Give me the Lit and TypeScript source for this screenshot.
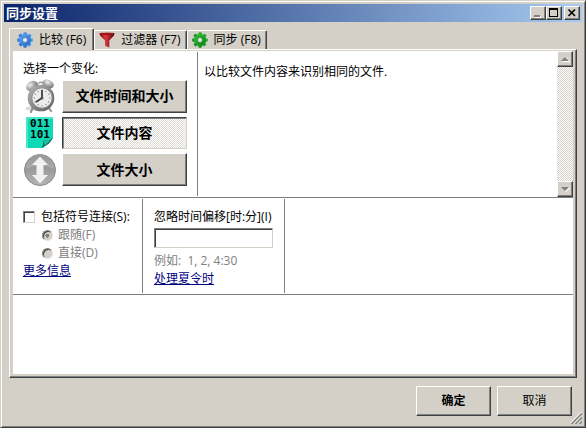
import { LitElement, html, css, svg } from "lit";
import { customElement, state } from "lit/decorators.js";
import { classMap } from "lit/directives/class-map.js";

const gear = (id: string, light: string, dark: string, hole: string) => html`
  <svg width="16" height="16" viewBox="0 0 16 16" aria-hidden="true">
    <defs>
      <linearGradient id=${id} x1="0" y1="0" x2="1" y2="1">
        <stop offset="0" stop-color=${light} />
        <stop offset="1" stop-color=${dark} />
      </linearGradient>
    </defs>
    ${[0, 45, 90, 135].map(
      (a) => svg`<rect x="6.2" y="0.2" width="3.6" height="15.6" rx="1" fill="url(#${id})" transform="rotate(${a} 8 8)" />`
    )}
    <circle cx="8" cy="8" r="6" fill="url(#${id})" />
    <circle cx="8" cy="8" r="2.5" fill=${hole} stroke=${dark} stroke-width="0.6" />
  </svg>
`;

const funnel = html`
  <svg width="16" height="16" viewBox="0 0 16 16" aria-hidden="true">
    <defs>
      <linearGradient id="funnel">
        <stop offset="0" stop-color="#7a0a0d" />
        <stop offset="0.4" stop-color="#d8383d" />
        <stop offset="1" stop-color="#5c0305" />
      </linearGradient>
    </defs>
    <path d="M0.5 1Q8 0 15.5 1L15 3.5L10.3 8.5V15.5L6 13.8V8.5L1 3.5Z" fill="url(#funnel)" />
    <ellipse cx="8" cy="2" rx="6.6" ry="1" fill="#9c1418" />
  </svg>
`;

const clock = html`
  <svg width="34" height="34" viewBox="0 0 34 34" aria-hidden="true">
    <defs>
      <radialGradient id="bell" cx="0.4" cy="0.3" r="0.7">
        <stop offset="0" stop-color="#f0f0f0" />
        <stop offset="1" stop-color="#6e6e6e" />
      </radialGradient>
      <linearGradient id="rim" x1="0" y1="0" x2="1" y2="1">
        <stop offset="0" stop-color="#b8b8b8" />
        <stop offset="1" stop-color="#585858" />
      </linearGradient>
    </defs>
    <ellipse cx="13" cy="29.5" rx="11" ry="2.5" fill="#dcdcdc" />
    <path d="M10 28L8 33M25 28L28 32" stroke="#8a8a8a" stroke-width="2" stroke-linecap="round" />
    <path d="M10 9L14 13M25 7L22 12" stroke="#777" stroke-width="2" />
    <ellipse cx="9" cy="7" rx="6.3" ry="4.6" transform="rotate(-32 9 7)" fill="url(#bell)" />
    <ellipse cx="25" cy="5" rx="6" ry="4.2" transform="rotate(25 25 5)" fill="url(#bell)" />
    <path d="M15 5Q17 2 20 4" fill="none" stroke="#999" stroke-width="1.3" />
    <circle cx="18" cy="19" r="13.3" fill="url(#rim)" />
    <circle cx="19" cy="19" r="10.2" fill="#ececec" stroke="#8d8d8d" />
    ${[0, 30, 60, 90, 120, 150, 180, 210, 240, 270, 300, 330].map(
      (a) => svg`<path d="M19 10.5V12" stroke="#888" transform="rotate(${a} 19 19)" />`
    )}
    <path d="M19 11V19L13 23" fill="none" stroke="#3c3c3c" stroke-width="1.8" stroke-linejoin="round" />
    <circle cx="19" cy="19" r="1.5" fill="#555" />
  </svg>
`;

const binaryPage = html`
  <svg width="34" height="32" viewBox="0 0 34 32" aria-hidden="true">
    <path d="M3 0H30V21L20 31H3Z" fill="#10d9b6" />
    <path d="M3 0H30V2H5V31H3Z" fill="#45e8cc" />
    <path d="M18 31Q21 28 20 23Q25 25 30 20.5Q27 28 18 31Z" fill="#076f5e" />
    <path d="M20 23Q25 25 30 20.5L22 28.5Q21 26 20 23Z" fill="#27bca2" />
    <text y="10" text-anchor="middle" font-family="DejaVu Sans Mono, monospace" font-weight="bold" font-size="11"><tspan x="17">011</tspan><tspan x="17" dy="11">101</tspan></text>
  </svg>
`;

const sizeArrow = html`
  <svg width="34" height="32" viewBox="0 0 34 32" aria-hidden="true">
    <defs>
      <linearGradient id="disc" x1="0" y1="0" x2="0" y2="1">
        <stop offset="0" stop-color="#7f7f7f" />
        <stop offset="0.5" stop-color="#9c9c9c" />
        <stop offset="1" stop-color="#b5b5b5" />
      </linearGradient>
    </defs>
    <circle cx="17" cy="16" r="15.5" fill="url(#disc)" stroke="#8a8a8a" />
    <path d="M2.500 15A14.500 14.500 0 0 1 31.500 15Q17 8 2.500 15Z" fill="#fff" opacity="0.18" />
    <path d="M17 2.500L25 11H20.500V21H25L17 29.500L9 21H13.500V11H9Z" fill="#f1f1f1" />
  </svg>
`;

@customElement("app-root")
export class AppRoot extends LitElement {
  @state() private tab = 0;
  @state() private variant = 1;

  static styles = css`
    :host {
      display: block;
      font: 12px/18px "Open Sans", "Noto Sans CJK SC", sans-serif;
      color: #000;
      cursor: default;
    }
    * {
      box-sizing: border-box;
    }
    button,
    input,
    textarea {
      font: inherit;
      color: inherit;
      margin: 0;
    }
    svg {
      display: block;
      flex: none;
    }
    .window {
      position: relative;
      min-height: 100vh;
      display: flex;
      flex-direction: column;
      padding: 3px;
      background: #d4d0c8;
      border: 1px solid;
      border-color: #d4d0c8 #404040 #404040 #d4d0c8;
      box-shadow: inset 1px 1px #fff, inset -1px -1px #808080;
    }
    .titlebar {
      display: flex;
      align-items: center;
      height: 18px;
      padding: 0 2px;
      background: linear-gradient(to right, #0a246a, #a6caf0);
    }
    .title {
      flex: 1;
      margin: 0;
      font-size: 13px;
      line-height: 18px;
      font-weight: 700;
      color: #fff;
    }
    .raised {
      padding: 0;
      background: #d4d0c8;
      border: 1px solid;
      border-color: #fff #404040 #404040 #fff;
      border-radius: 0;
      box-shadow: inset -1px -1px #808080;
    }
    .caption {
      width: 16px;
      height: 14px;
    }
    .close {
      margin-left: 2px;
    }
    .body {
      flex: 1;
      display: flex;
      flex-direction: column;
      padding: 6px 5px 0;
    }
    .tabs {
      display: flex;
      align-items: flex-end;
      height: 21px;
    }
    .tab {
      display: flex;
      align-items: center;
      gap: 6px;
      height: 19px;
      padding: 0 5px 0 4px;
      background: #d4d0c8;
      border: 1px solid;
      border-color: #fff #404040 transparent #fff;
      border-bottom: 0;
      border-radius: 2px 2px 0 0;
      box-shadow: inset -1px 0 #808080;
      white-space: nowrap;
    }
    .tab.selected {
      position: relative;
      height: 22px;
      margin-bottom: -1px;
      padding: 0 7px;
    }
    .pane {
      flex: 1;
      display: flex;
      padding: 1px 2px 2px 3px;
      border: 1px solid;
      border-color: #fff #404040 #404040 #fff;
      box-shadow: inset -1px -1px #808080;
    }
    .page {
      flex: 1;
      background: #fff;
      margin: 0 1px 1px 0;
    }
    .row {
      display: flex;
      border-bottom: 1px solid #808080;
    }
    .cell {
      margin: 1px 0;
      border-right: 1px solid #808080;
    }
    .variants {
      width: 185px;
      padding: 8px 10px 10px;
    }
    .choices {
      display: grid;
      gap: 4px;
      margin-top: 1px;
    }
    .choice {
      display: grid;
      grid-template-columns: 34px 1fr;
      align-items: center;
      column-gap: 5px;
      height: 33px;
    }
    .toggle {
      height: 33px;
      font-size: 14px;
      font-weight: 700;
    }
    .toggle.pressed {
      height: 32px;
      background: repeating-conic-gradient(#fff 0 25%, #dedbd5 0 50%) 0 0 / 2px 2px;
      border-color: #404040 #d4d0c8 #d4d0c8 #404040;
      box-shadow: inset 1px 1px #808080;
    }
    .description {
      flex: 1;
      min-width: 0;
      display: flex;
    }
    .note {
      flex: 1;
      min-width: 0;
      resize: none;
      border: 0;
      outline: 0;
      padding: 12px 6px;
      background: #fff;
      overflow: hidden;
    }
    .scrollbar {
      display: flex;
      flex-direction: column;
      justify-content: space-between;
      width: 16px;
      background: repeating-conic-gradient(#fff 0 25%, #d4d0c8 0 50%) 0 0 / 2px 2px;
    }
    .scroll {
      width: 16px;
      height: 16px;
    }
    .links {
      width: 130px;
      padding: 9px 0 5px 10px;
    }
    .shift {
      width: 142px;
      padding: 9px 11px 5px;
    }
    .line {
      display: flex;
      align-items: center;
      height: 18px;
      white-space: nowrap;
    }
    .group {
      margin: 0;
      padding: 0 0 0 19px;
      border: 0;
      color: #808080;
    }
    .check {
      appearance: none;
      width: 12px;
      height: 12px;
      margin-right: 6px;
      background: #fff;
      border: 1px solid;
      border-color: #808080 #d4d0c8 #d4d0c8 #808080;
      box-shadow: inset 1px 1px #404040;
    }
    .radio {
      appearance: none;
      width: 11px;
      height: 11px;
      margin-right: 5px;
      border-radius: 50%;
      border: 1px solid;
      border-color: #808080 #e8e5df #e8e5df #808080;
      background: #d4d0c8;
      box-shadow: inset 1px 1px #404040;
    }
    .radio:checked {
      background: radial-gradient(circle, #808080 2px, #d4d0c8 2px);
    }
    .offset {
      display: block;
      width: 100%;
      height: 20px;
      margin: 2px 0 4px;
      padding: 0 3px;
      background: #fff;
      border: 1px solid;
      border-color: #808080 #d4d0c8 #d4d0c8 #808080;
      border-radius: 0;
      box-shadow: inset 1px 1px #404040;
    }
    .hint {
      color: #808080;
      white-space: pre;
    }
    a {
      color: #000080;
      text-decoration: underline;
    }
    .footer {
      display: flex;
      justify-content: flex-end;
      gap: 6px;
      padding: 8px 10px;
    }
    .action {
      width: 75px;
      height: 30px;
    }
    .default {
      font-weight: 700;
    }
    .grip {
      position: absolute;
      right: 3px;
      bottom: 3px;
    }
  `;

  private tabs = [
    { label: "比较 (F6)", icon: gear("blue", "#5aa7f5", "#2468c0", "#e4e6ea") },
    { label: "过滤器 (F7)", icon: funnel },
    { label: "同步 (F8)", icon: gear("green", "#35c435", "#0a7a1c", "#e2e6de") },
  ];

  private variants = [
    { label: "文件时间和大小", icon: clock },
    { label: "文件内容", icon: binaryPage },
    { label: "文件大小", icon: sizeArrow },
  ];

  render() {
    return html`
      <main class="window">
        <header class="titlebar">
          <h1 class="title">同步设置</h1>
          <button class="raised caption" aria-label="最小化">
            <svg width="14" height="12" viewBox="0 0 14 12"><path d="M4 9H10V11H4Z" fill="#fff" /><path d="M3 8H9V10H3Z" fill="#808080" /></svg>
          </button>
          <button class="raised caption" aria-label="最大化">
            <svg width="14" height="12" viewBox="0 0 14 12"><path d="M2 1H11V10H2ZM3 3V9H10V3Z" fill-rule="evenodd" /></svg>
          </button>
          <button class="raised caption close" aria-label="关闭">
            <svg width="14" height="12" viewBox="0 0 14 12"><path d="M3.500 2.500L10 9M10 2.500L3.500 9" stroke="#000" stroke-width="1.700" /></svg>
          </button>
        </header>
        <div class="body">
          <div class="tabs" role="tablist">
            ${this.tabs.map(
              (t, i) => html`<button
                role="tab"
                aria-selected=${i === this.tab}
                class=${classMap({ tab: true, selected: i === this.tab })}
                @click=${() => (this.tab = i)}
              >${t.icon}<span>${t.label}</span></button>`
            )}
          </div>
          <div class="pane" role="tabpanel">
            <div class="page">
              <section class="row">
                <div class="cell variants">
                  <div class="line">选择一个变化:</div>
                  <div class="choices">
                    ${this.variants.map(
                      (v, i) => html`<div class="choice">
                        ${v.icon}
                        <button
                          class=${classMap({ raised: true, toggle: true, pressed: i === this.variant })}
                          aria-pressed=${i === this.variant}
                          @click=${() => (this.variant = i)}
                        >${v.label}</button>
                      </div>`
                    )}
                  </div>
                </div>
                <div class="description">
                  <textarea class="note" readonly aria-label="说明">以比较文件内容来识别相同的文件.</textarea>
                  <div class="scrollbar">
                    <button class="raised scroll" aria-label="向上">
                      <svg width="14" height="14" viewBox="0 0 14 14"><path d="M4 10H12V9L8 5Z" fill="#fff" /><path d="M3 9H11L7 5Z" fill="#808080" /></svg>
                    </button>
                    <button class="raised scroll" aria-label="向下">
                      <svg width="14" height="14" viewBox="0 0 14 14"><path d="M11 5L12 6L8 10L7 9Z" fill="#fff" /><path d="M3 5H11L7 9Z" fill="#808080" /></svg>
                    </button>
                  </div>
                </div>
              </section>
              <section class="row">
                <div class="cell links">
                  <label class="line"><input class="check" type="checkbox" />包括符号连接(S):</label>
                  <fieldset class="group" disabled aria-label="包括符号连接">
                    <label class="line"><input class="radio" type="radio" name="symlink" checked />跟随(F)</label>
                    <label class="line"><input class="radio" type="radio" name="symlink" />直接(D)</label>
                  </fieldset>
                  <div class="line"><a href="#info">更多信息</a></div>
                </div>
                <div class="cell shift">
                  <label class="line" for="offset">忽略时间偏移[时:分](I)</label>
                  <input class="offset" id="offset" type="text" />
                  <div class="line hint">例如:  1, 2, 4:30</div>
                  <div class="line"><a href="#dst">处理夏令时</a></div>
                </div>
              </section>
            </div>
          </div>
        </div>
        <footer class="footer">
          <button class="raised action default">确定</button>
          <button class="raised action">取消</button>
        </footer>
        <svg class="grip" width="12" height="12" viewBox="0 0 12 12" aria-hidden="true">
          <path d="M-0.500 12L12 -0.500M3.500 12L12 3.500M7.500 12L12 7.500" stroke="#fff" />
          <path d="M1 12.500L12.500 1M5 12.500L12.500 5M9 12.500L12.500 9" stroke="#808080" stroke-width="1.500" />
        </svg>
      </main>
    `;
  }
}
